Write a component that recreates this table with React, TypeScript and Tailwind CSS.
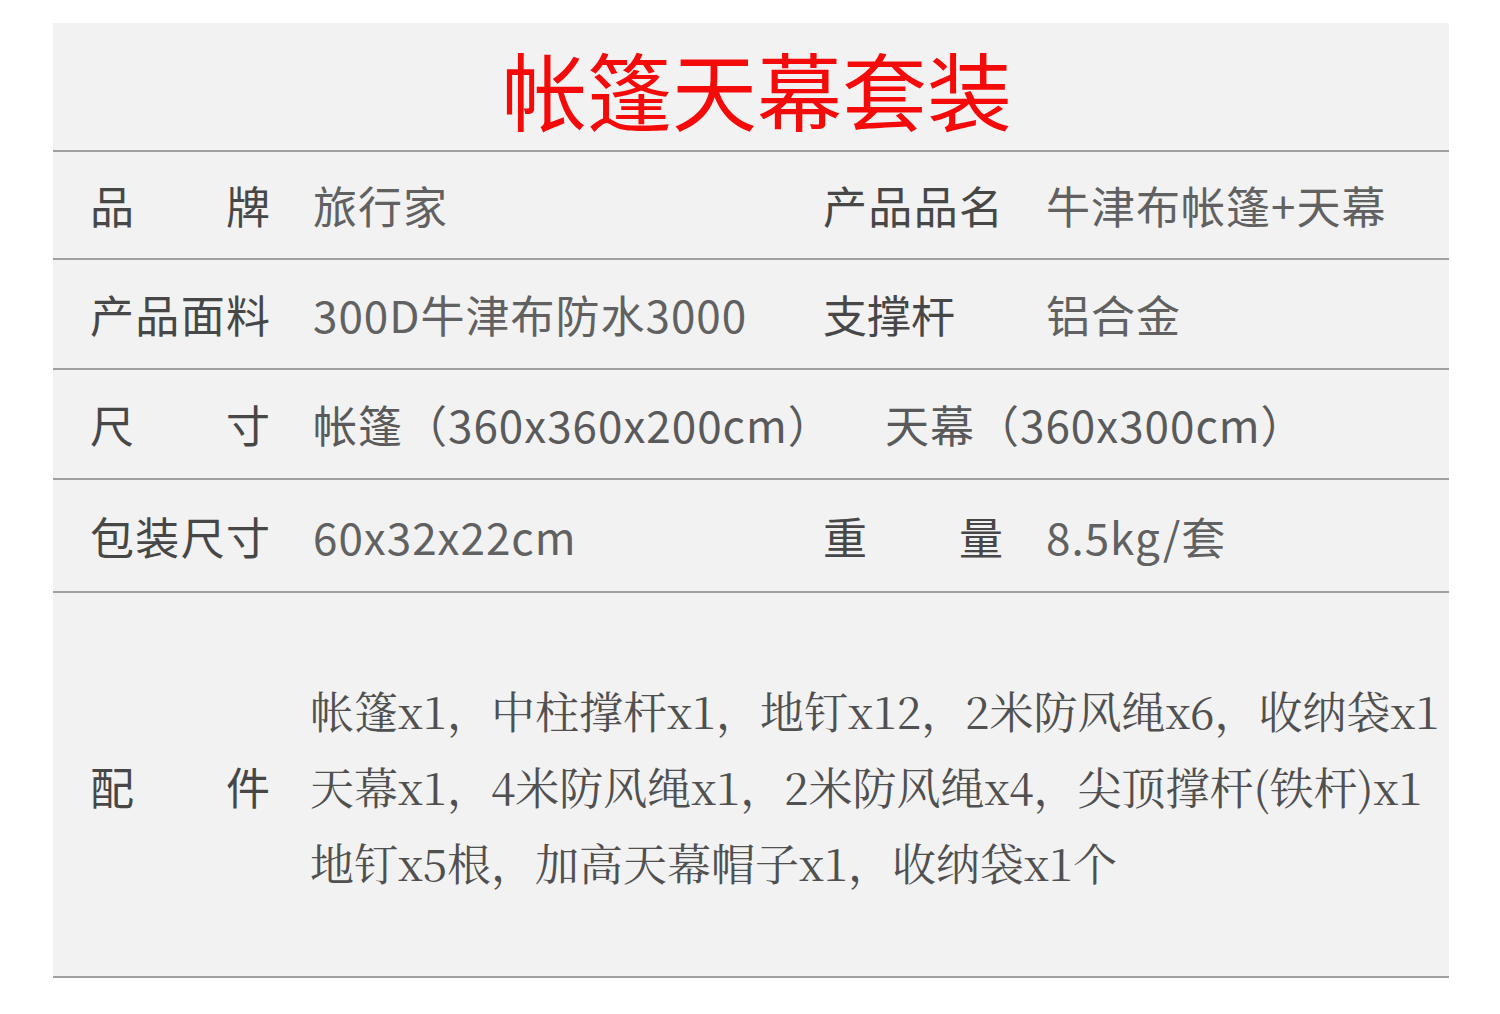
import React from 'react';

const sans = { fontFamily: '"Noto Sans CJK SC", "Noto Sans", sans-serif' };
const serif = { fontFamily: '"Noto Serif CJK SC", "Liberation Serif", "Noto Sans CJK SC", serif' };

// label spread across a fixed 180px box, like 品　　牌
const Label = ({ text, spread = true }: { text: string; spread?: boolean }) => (
  <div className={`w-[180px] shrink-0 flex ${spread ? 'justify-between' : ''} text-[#474747]`}>
    {text.split('').map((c, i) => (
      <span key={i}>{c}</span>
    ))}
  </div>
);

const specs = [
  { h: 'h-[108px]', l1: '品牌', v1: '旅行家', l2: '产品品名', v2: '牛津布帐篷+天幕' },
  { h: 'h-[110px]', l1: '产品面料', v1: '300D牛津布防水3000', l2: '支撑杆', v2: '铝合金', noSpread: true },
];

const accessories = [
  '帐篷x1，中柱撑杆x1，地钉x12，2米防风绳x6，收纳袋x1',
  '天幕x1，4米防风绳x1，2米防风绳x4，尖顶撑杆(铁杆)x1',
  '地钉x5根，加高天幕帽子x1，收纳袋x1个',
];

const App: React.FC = () => {
  return (
    <div className="w-[1500px] h-[1014px] bg-white pt-[23px] pl-[53px]" style={sans}>
      <div className="w-[1396px] bg-[#f2f2f2]">
        {/* Title */}
        <div className="h-[129px] border-b-2 border-[#a0a0a0] flex items-center justify-center pt-[1px] pl-[12px]">
          <h1 className="text-[85px] leading-none text-[#f50a0a]">帐篷天幕套装</h1>
        </div>

        {specs.map((r, idx) => (
          <div key={idx} className={`${r.h} border-b-2 border-[#a0a0a0] flex items-center pl-[37px] text-[44px] leading-none`}>
            <Label text={r.l1} />
            <div className="ml-[43px] w-[510px] shrink-0 text-[#616161] tracking-[1px]">{r.v1}</div>
            <Label text={r.l2} spread={!r.noSpread} />
            <div className="ml-[43px] text-[#616161] tracking-[1px]">{r.v2}</div>
          </div>
        ))}

        {/* Size row */}
        <div className="h-[110px] border-b-2 border-[#a0a0a0] flex items-center pl-[37px] text-[44px] leading-none">
          <Label text="尺寸" />
          <div className="ml-[43px] w-[572px] shrink-0 text-[#5a5a5a] tracking-[1px]">帐篷（360x360x200cm）</div>
          <div className="text-[#5a5a5a] tracking-[1px]">天幕（360x300cm）</div>
        </div>

        <div className="h-[113px] border-b-2 border-[#a0a0a0] flex items-center pl-[37px] text-[44px] leading-none">
          <Label text="包装尺寸" />
          <div className="ml-[43px] w-[510px] shrink-0 text-[#616161] tracking-[1px]">60x32x22cm</div>
          <Label text="重量" />
          <div className="ml-[43px] text-[#616161] tracking-[1px]">8.5kg/套</div>
        </div>

        {/* Accessories */}
        <div className="h-[385px] border-b-2 border-[#a0a0a0] flex items-center pl-[37px]">
          <div className="text-[44px] leading-none pt-[2px]">
            <Label text="配件" />
          </div>
          <div className="ml-[40px] text-[44px] leading-[76px] text-[#505050] pt-[2px]" style={serif}>
            {accessories.map((line, i) => (
              <div key={i} className="whitespace-nowrap">{line}</div>
            ))}
          </div>
        </div>
      </div>
    </div>
  );
};

export default App;
